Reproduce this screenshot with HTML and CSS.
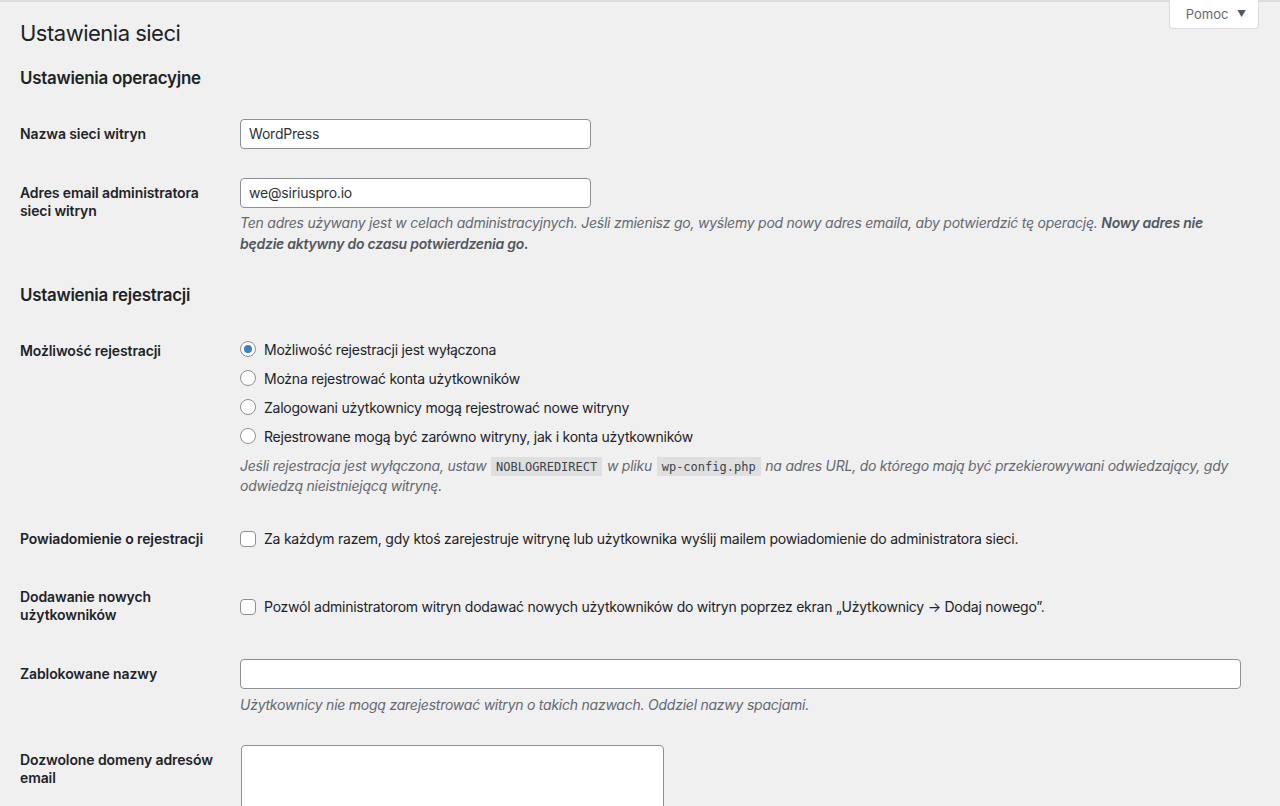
FILE: index.html
```html
<!DOCTYPE html>
<html lang="pl">
<head>
<meta charset="utf-8">
<title>Ustawienia sieci</title>
<link rel="stylesheet" href="styles.css">
</head>
<body>
<div class="topline"></div>
<div class="wrap">
  <div class="help-tab"><button class="help-btn" type="button">Pomoc <span class="caret">▼</span></button></div>
  <h1 class="page-title">Ustawienia sieci</h1>

  <h2 class="section-title">Ustawienia operacyjne</h2>
  <div class="form-table">
    <div class="row">
      <div class="th">Nazwa sieci witryn</div>
      <div class="td"><input class="text regular" type="text" value="WordPress"></div>
    </div>
    <div class="row">
      <div class="th">Adres email administratora sieci witryn</div>
      <div class="td">
        <input class="text regular" type="text" value="we@siriuspro.io">
        <p class="description">Ten adres używany jest w celach administracyjnych. Jeśli zmienisz go, wyślemy pod nowy adres emaila, aby potwierdzić tę operację. <strong>Nowy adres nie będzie aktywny do czasu potwierdzenia go.</strong></p>
      </div>
    </div>
  </div>

  <h2 class="section-title">Ustawienia rejestracji</h2>
  <div class="form-table">
    <div class="row">
      <div class="th">Możliwość rejestracji</div>
      <div class="td radios">
        <label class="choice"><span class="radio checked"></span>Możliwość rejestracji jest wyłączona</label>
        <label class="choice"><span class="radio"></span>Można rejestrować konta użytkowników</label>
        <label class="choice"><span class="radio"></span>Zalogowani użytkownicy mogą rejestrować nowe witryny</label>
        <label class="choice"><span class="radio"></span>Rejestrowane mogą być zarówno witryny, jak i konta użytkowników</label>
        <p class="description tight">Jeśli rejestracja jest wyłączona, ustaw <code>NOBLOGREDIRECT</code> w pliku <code>wp-config.php</code> na adres URL, do którego mają być przekierowywani odwiedzający, gdy odwiedzą nieistniejącą witrynę.</p>
      </div>
    </div>
    <div class="row">
      <div class="th">Powiadomienie o rejestracji</div>
      <div class="td aligned">
        <label class="choice check-line"><span class="checkbox"></span>Za każdym razem, gdy ktoś zarejestruje witrynę lub użytkownika wyślij mailem powiadomienie do administratora sieci.</label>
      </div>
    </div>
    <div class="row spaced">
      <div class="th">Dodawanie nowych użytkowników</div>
      <div class="td middle">
        <label class="choice check-line"><span class="checkbox"></span>Pozwól administratorom witryn dodawać nowych użytkowników do witryn poprzez ekran „Użytkownicy → Dodaj nowego”.</label>
      </div>
    </div>
    <div class="row">
      <div class="th">Zablokowane nazwy</div>
      <div class="td roomy">
        <input class="text large" type="text" value="">
        <p class="description">Użytkownicy nie mogą zarejestrować witryn o takich nazwach. Oddziel nazwy spacjami.</p>
      </div>
    </div>
    <div class="row">
      <div class="th">Dozwolone domeny adresów email</div>
      <div class="td"><textarea class="area"></textarea></div>
    </div>
  </div>
</div>
</body>
</html>
```

FILE: styles.css
```css
html, body {
  margin: 0;
  padding: 0;
  background: #f0f0f1;
}
body {
  font-family: Inter, "Noto Sans", sans-serif;
  font-size: 14px;
  color: #1d2327;
  overflow: hidden;
  height: 806px;
  letter-spacing: -0.24px;
}
.topline {
  height: 2px;
  background: #dcdcde;
}
.wrap {
  padding: 0 20px 0 20px;
}
.help-tab {
  float: right;
  margin-top: -2px;
  margin-right: 1px;
}
.help-btn {
  width: 90px;
  height: 29px;
  background: #fff;
  border: 1px solid #dcdcde;
  border-top: none;
  border-radius: 0 0 4px 4px;
  font-family: inherit;
  font-size: 13px;
  letter-spacing: 0;
  color: #646970;
  padding: 0 0 0 4px;
  text-align: center;
}
.caret {
  font-size: 9px;
  margin-left: 5px;
  position: relative;
  top: -2px;
  color: #50575e;
}
.page-title {
  font-size: 22px;
  font-weight: 400;
  line-height: 1.3;
  letter-spacing: -0.5px;
  margin: 0;
  padding: 17px 0 0 0;
}
.section-title {
  font-size: 16.9px;
  font-weight: 600;
  line-height: 25px;
  letter-spacing: -0.25px;
  margin: 0;
  padding-top: 18px;
}
.section-title + .form-table {
  margin-top: 14px;
}
.form-table + .section-title {
  padding-top: 14px;
}
.form-table {
  display: flex;
  flex-direction: column;
}
.row {
  display: flex;
  align-items: stretch;
}
.th {
  width: 200px;
  flex: none;
  padding: 20px 10px 20px 0;
  font-weight: 600;
  line-height: 18.2px;
  letter-spacing: -0.1px;
}
.row.spaced .th {
  padding-bottom: 21px;
}
.td {
  flex: 1;
  padding: 14px 10px 15px;
  line-height: 18.2px;
}
.td.radios {
  padding-top: 13px;
  padding-bottom: 14px;
}
.td.radios .description {
  margin-top: 5px;
}
.td.aligned {
  padding-top: 20px;
  padding-bottom: 20px;
}
.td.aligned .check-line {
  height: 18px;
}
.td.middle {
  display: flex;
  align-items: center;
  padding-top: 15px;
}
.td.roomy {
  padding-bottom: 16px;
}
.td.roomy .description {
  margin-top: 5px;
}
.text {
  box-sizing: border-box;
  height: 30px;
  display: block;
  border: 1px solid #8c8f94;
  border-radius: 4px;
  background: #fff;
  font-family: inherit;
  font-size: 14px;
  letter-spacing: -0.2px;
  color: #2c3338;
  padding: 0 8px;
  margin: 0;
}
.text.regular {
  width: 351px;
}
.text.large {
  width: 1001px;
}
.description {
  margin: 4px 0 0 0;
  color: #646970;
  font-style: italic;
  line-height: 21px;
  font-size: 14px;
}
.description strong {
  font-weight: 600;
  color: #50575e;
}
.description.tight {
  line-height: 20px;
}
code {
  font-family: "DejaVu Sans Mono", "Liberation Mono", monospace;
  font-style: normal;
  font-size: 12px;
  line-height: 1;
  letter-spacing: 0;
  background: rgba(0, 0, 0, 0.07);
  padding: 3px 5px 2px;
  margin: 0 1px;
  color: #3c434a;
}
.choice {
  display: flex;
  align-items: center;
  height: 29px;
  line-height: 29px;
}
.check-line {
  height: 24px;
}
.radio {
  box-sizing: border-box;
  width: 16px;
  height: 16px;
  border: 1px solid #8c8f94;
  border-radius: 50%;
  background: #fff;
  margin-right: 8px;
  flex: none;
  display: flex;
  align-items: center;
  justify-content: center;
}
.radio.checked::after {
  content: "";
  width: 8px;
  height: 8px;
  border-radius: 50%;
  background: #3582c4;
}
.checkbox {
  box-sizing: border-box;
  width: 16px;
  height: 16px;
  border: 1px solid #8c8f94;
  border-radius: 4px;
  background: #fff;
  margin-right: 8px;
  flex: none;
}
.area {
  display: block;
  box-sizing: border-box;
  width: 423px;
  height: 100px;
  margin: 0 0 0 1px;
  border: 1px solid #8c8f94;
  border-radius: 4px;
  background: #fff;
  resize: none;
}
```
